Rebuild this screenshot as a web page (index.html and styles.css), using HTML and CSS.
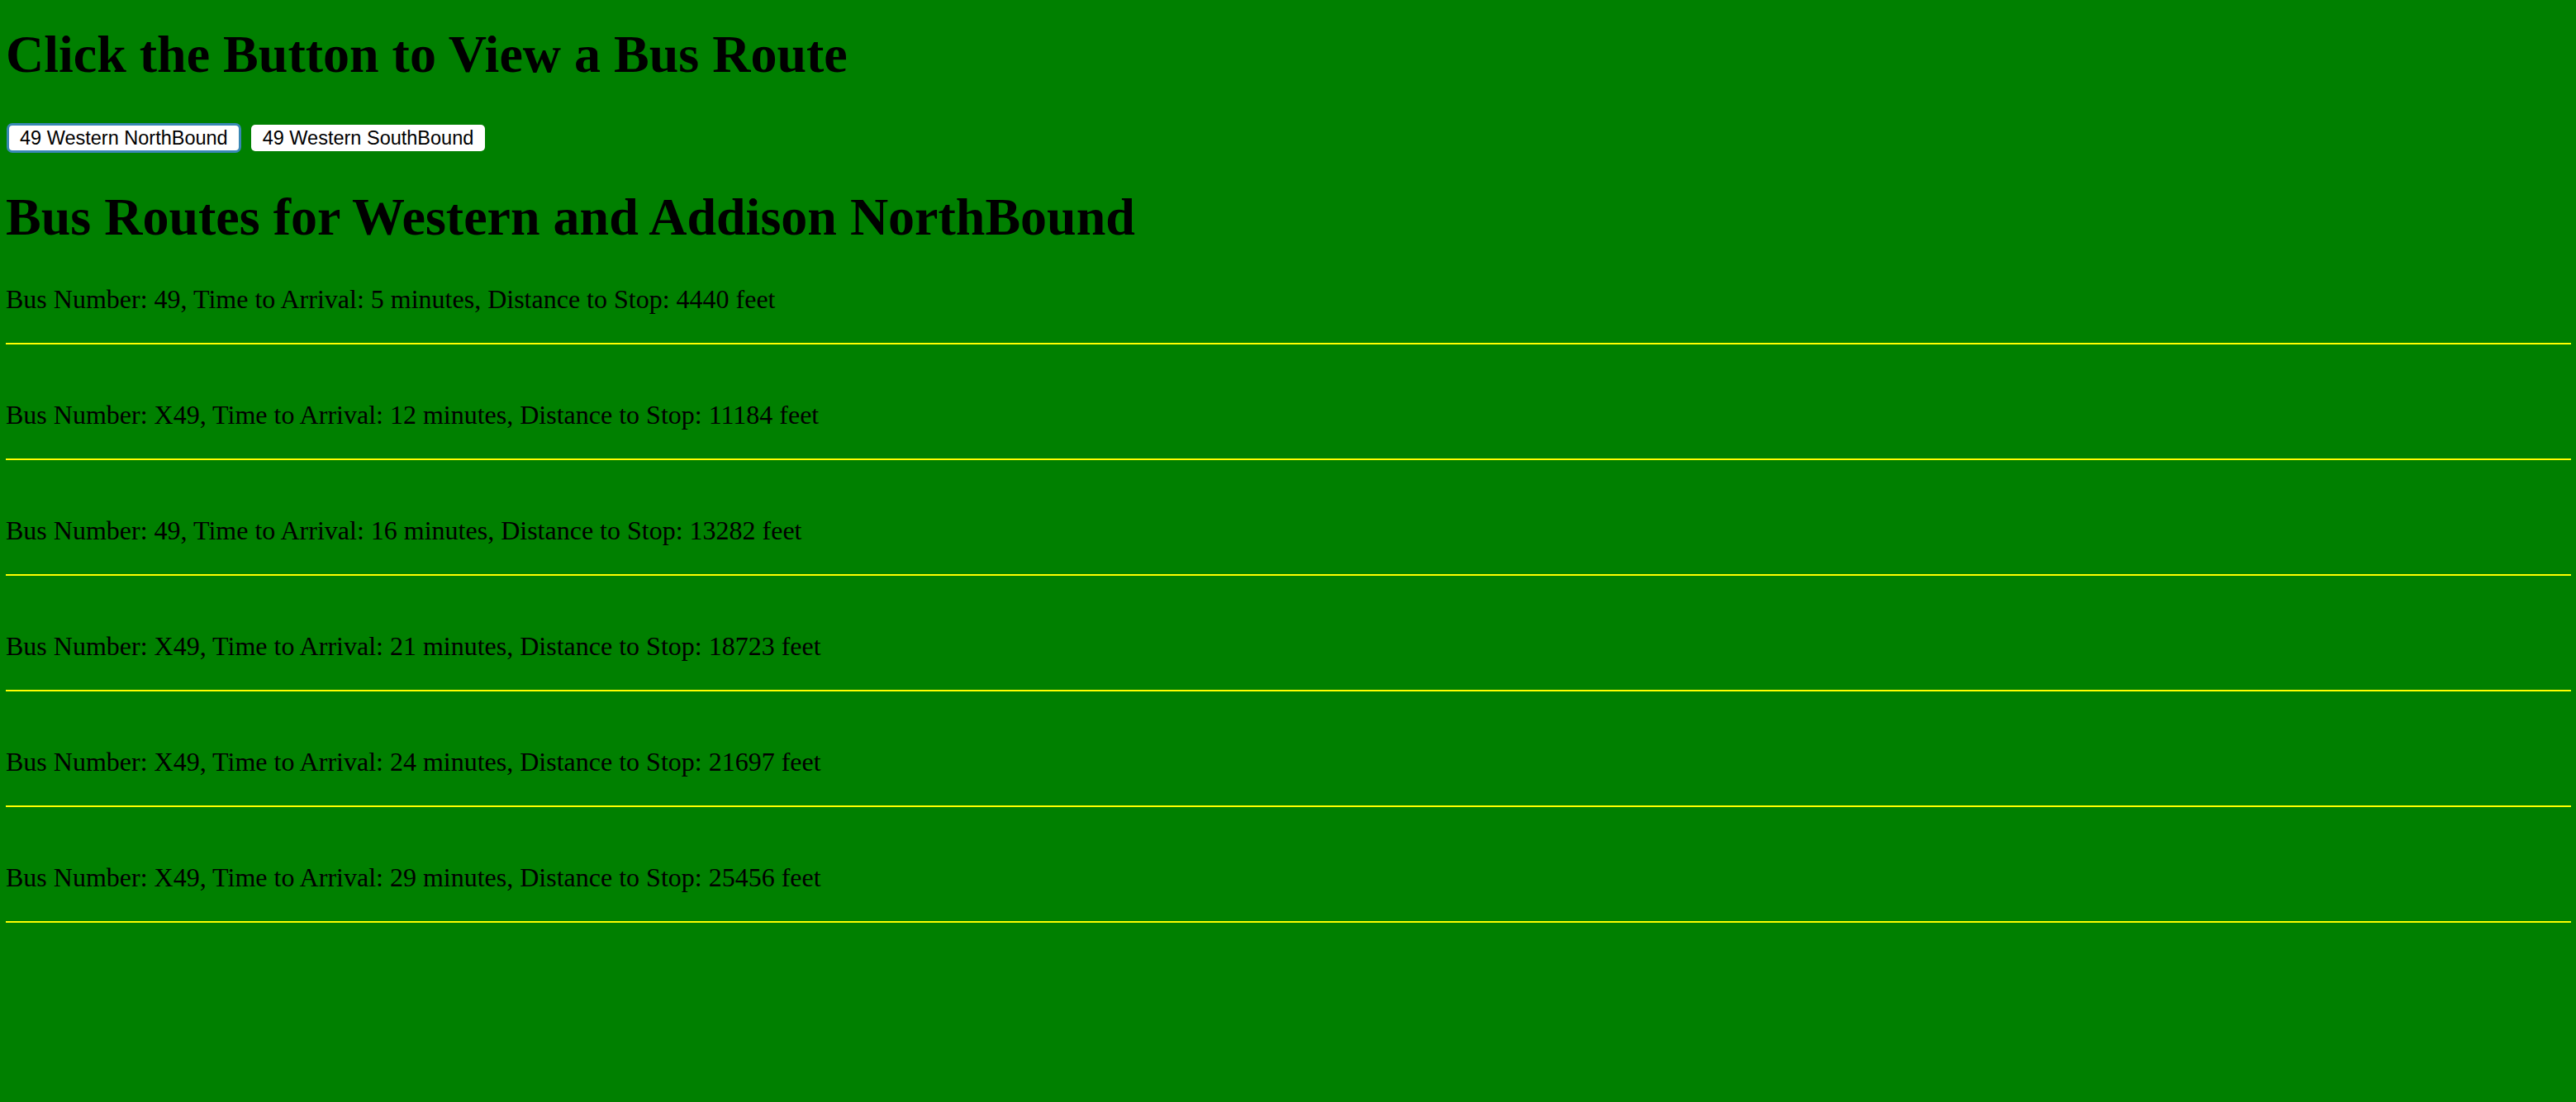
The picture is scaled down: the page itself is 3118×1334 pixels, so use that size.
FILE: index.html
```html
<!DOCTYPE html>
<html lang="en">
<head>
<meta charset="utf-8">
<title>Bus Routes</title>
<link rel="stylesheet" href="styles.css">
</head>
<body>
<h1 class="title">Click the Button to View a Bus Route</h1>
<div class="controls">
  <button class="route-btn is-focused" type="button">49 Western NorthBound</button>
  <button class="route-btn" type="button">49 Western SouthBound</button>
</div>
<h1 class="subtitle">Bus Routes for Western and Addison NorthBound</h1>
<div class="routes">
  <div class="route"><p class="route-text">Bus Number: 49, Time to Arrival: 5 minutes, Distance to Stop: 4440 feet</p><hr class="divider"></div>
  <div class="route"><p class="route-text">Bus Number: X49, Time to Arrival: 12 minutes, Distance to Stop: 11184 feet</p><hr class="divider"></div>
  <div class="route"><p class="route-text">Bus Number: 49, Time to Arrival: 16 minutes, Distance to Stop: 13282 feet</p><hr class="divider"></div>
  <div class="route"><p class="route-text">Bus Number: X49, Time to Arrival: 21 minutes, Distance to Stop: 18723 feet</p><hr class="divider"></div>
  <div class="route"><p class="route-text">Bus Number: X49, Time to Arrival: 24 minutes, Distance to Stop: 21697 feet</p><hr class="divider"></div>
  <div class="route"><p class="route-text">Bus Number: X49, Time to Arrival: 29 minutes, Distance to Stop: 25456 feet</p><hr class="divider"></div>
</div>
</body>
</html>
```

FILE: styles.css
```css
html {
  background: #008000;
}
body {
  margin: 0;
  padding: 1px 6px 0 7px;
  min-height: 1333px;
  background: #008000;
  color: #000;
  font-family: "Liberation Serif", "Times New Roman", serif;
}
.title,
.subtitle {
  font-size: 64px;
  font-weight: bold;
  line-height: 74px;
  margin: 0;
}
.title {
  margin-top: 28px;
}
.controls {
  display: flex;
  gap: 14px;
  margin-top: 48px;
  padding-left: 3px;
}
.route-btn {
  box-sizing: border-box;
  height: 32px;
  padding: 1px 14px 0;
  border: 0;
  border-radius: 5px;
  background: #fff;
  color: #000;
  font-family: "Liberation Sans", Arial, sans-serif;
  font-size: 23.5px;
  line-height: 31px;
}
.route-btn.is-focused {
  outline: 3px solid #3a88b5;
  outline-offset: -1px;
}
.subtitle {
  margin-top: 43px;
}
.routes {
  display: flex;
  flex-direction: column;
}
.route-text {
  font-size: 32px;
  line-height: 40px;
  margin: 65px 0 33px;
}
.route:first-child .route-text {
  margin-top: 42px;
}
.divider {
  margin: 0;
  height: 2px;
  border: 0;
  background: #ffff00;
}
```
